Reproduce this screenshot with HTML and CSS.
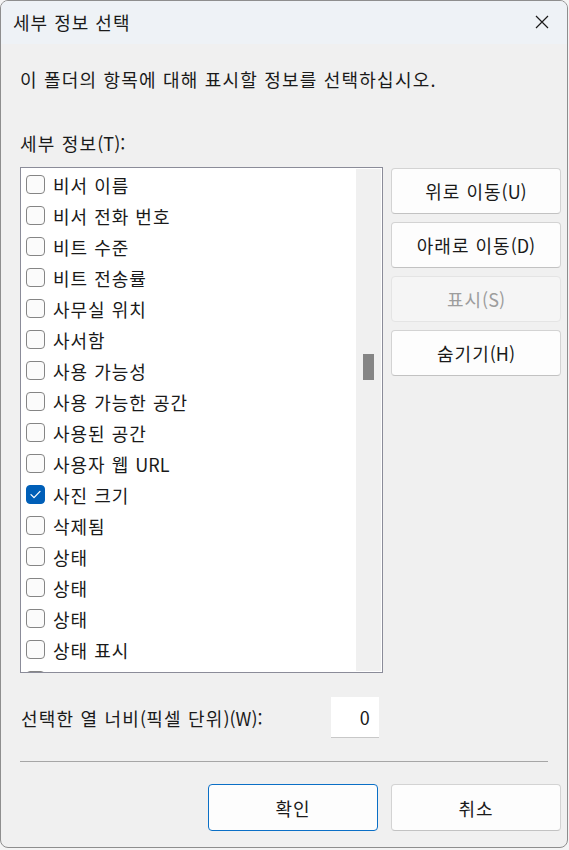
FILE: index.html
```html
<!DOCTYPE html>
<html lang="ko">
<head>
<meta charset="utf-8">
<title>세부 정보 선택</title>
<link rel="stylesheet" href="styles.css">
</head>
<body>
<div class="window">
  <div class="titlebar">
    <span class="title">세부 정보 선택</span>
    <span class="close">
      <svg width="14" height="14" viewBox="0 0 14 14"><path d="M1 1 L13 13 M13 1 L1 13" stroke="#1a1a1a" stroke-width="1.2" fill="none"/></svg>
    </span>
  </div>
  <div class="content">
    <p class="desc">이 폴더의 항목에 대해 표시할 정보를 선택하십시오.</p>
    <p class="label">세부 정보<span class="lat">(T):</span></p>
    <div class="main">
      <div class="listbox">
        <ul class="items">
          <li class="item"><span class="cb"></span><span>비서 이름</span></li>
          <li class="item"><span class="cb"></span><span>비서 전화 번호</span></li>
          <li class="item"><span class="cb"></span><span>비트 수준</span></li>
          <li class="item"><span class="cb"></span><span>비트 전송률</span></li>
          <li class="item"><span class="cb"></span><span>사무실 위치</span></li>
          <li class="item"><span class="cb"></span><span>사서함</span></li>
          <li class="item"><span class="cb"></span><span>사용 가능성</span></li>
          <li class="item"><span class="cb"></span><span>사용 가능한 공간</span></li>
          <li class="item"><span class="cb"></span><span>사용된 공간</span></li>
          <li class="item"><span class="cb"></span><span>사용자 웹 <span class="lat">URL</span></span></li>
          <li class="item"><span class="cb checked"><svg width="19" height="19" viewBox="0 0 19 19"><path d="M5 9.6 L8 12.6 L14 6.4" stroke="#ffffff" stroke-width="1.3" fill="none" stroke-linecap="round" stroke-linejoin="round"/></svg></span><span>사진 크기</span></li>
          <li class="item"><span class="cb"></span><span>삭제됨</span></li>
          <li class="item"><span class="cb"></span><span>상태</span></li>
          <li class="item"><span class="cb"></span><span>상태</span></li>
          <li class="item"><span class="cb"></span><span>상태</span></li>
          <li class="item"><span class="cb"></span><span>상태 표시</span></li>
          <li class="item partial"><span class="cb"></span></li>
        </ul>
        <div class="scrollbar"><div class="thumb"></div></div>
      </div>
      <div class="side">
        <button class="btn">위로 이동<span class="lat">(U)</span></button>
        <button class="btn">아래로 이동<span class="lat">(D)</span></button>
        <button class="btn disabled">표시<span class="lat">(S)</span></button>
        <button class="btn">숨기기<span class="lat">(H)</span></button>
      </div>
    </div>
    <div class="width-row">
      <span class="width-label">선택한 열 너비<span class="lat">(</span>픽셀 단위<span class="lat">)(W):</span></span>
      <span class="width-input">0</span>
    </div>
    <div class="sep"></div>
    <div class="footer">
      <button class="btn primary">확인</button>
      <button class="btn">취소</button>
    </div>
  </div>
</div>
</body>
</html>
```

FILE: styles.css
```css
* { box-sizing: border-box; }
html, body {
  margin: 0;
  padding: 0;
  background: #f4f4f4;
}
body {
  font-family: "Noto Sans CJK KR", "Noto Sans", sans-serif;
  color: #1a1a1a;
  font-size: 18px;
  letter-spacing: 1.2px;
}
.lat {
  letter-spacing: 0;
}
.window {
  width: 568px;
  height: 848px;
  border: 1px solid #8e8e8e;
  border-radius: 8px;
  background: #f0f0f0;
  overflow: hidden;
  display: flex;
  flex-direction: column;
}
.titlebar {
  height: 43px;
  background: #eef2f6;
  display: flex;
  align-items: center;
  justify-content: space-between;
  padding-left: 12px;
  padding-right: 18px;
}
.title {
  font-size: 18px;
  letter-spacing: 1px;
  line-height: 24px;
  margin-top: -2px;
}
.close {
  display: flex;
  margin-top: -1px;
}
.content {
  padding: 0 0 0 19px;
  display: flex;
  flex-direction: column;
}
.desc {
  margin: 23px 0 0 0;
  line-height: 24px;
}
.label {
  margin: 40px 0 0 0;
  line-height: 24px;
}
.main {
  margin-top: 12px;
  display: flex;
  gap: 8px;
  align-items: flex-start;
}
.listbox {
  width: 363px;
  height: 506px;
  border: 1px solid #8b8c99;
  background: #ffffff;
  display: flex;
  overflow: hidden;
}
.items {
  list-style: none;
  margin: 0;
  padding: 1px 0 0 5px;
  flex: 1;
  overflow: hidden;
}
.item {
  height: 31px;
  display: flex;
  align-items: center;
  gap: 8px;
  line-height: 24px;
  white-space: nowrap;
  letter-spacing: 1px;
}
.cb {
  width: 19px;
  height: 19px;
  flex: none;
  border: 1px solid #858585;
  border-radius: 4px;
  background: #fbfbfb;
  display: flex;
}
.cb.checked {
  background: #005fb8;
  border-color: #005fb8;
}
.cb.checked svg {
  margin: -1px;
}
.scrollbar {
  width: 25px;
  flex: none;
  background: #f0f0f0;
  margin: 1px 1px 1px 0;
  padding-top: 185px;
  display: flex;
  justify-content: center;
}
.thumb {
  width: 11px;
  height: 26px;
  background: #858585;
}
.side {
  display: flex;
  flex-direction: column;
  gap: 8px;
  padding-top: 1px;
}
.btn {
  font-family: inherit;
  font-size: 18px;
  letter-spacing: 1px;
  color: #1a1a1a;
  width: 170px;
  height: 46px;
  background: #fdfdfd;
  border: 1px solid #d3d3d3;
  border-bottom-color: #c2c2c2;
  border-radius: 4px;
  padding: 0;
  line-height: 24px;
}
.btn .lat {
  letter-spacing: 0;
}
.btn.disabled {
  background: #f5f5f5;
  border-color: #e4e4e4;
  color: #9d9d9d;
}
.btn.primary {
  border: 1px solid #0a6fc6;
}
.width-row {
  margin-top: 24px;
  display: flex;
  align-items: center;
  width: 359px;
  justify-content: space-between;
}
.width-label {
  line-height: 24px;
  padding-left: 1px;
}
.width-input {
  width: 48px;
  height: 41px;
  background: #ffffff;
  border-bottom: 1px solid #c8c8c8;
  display: flex;
  align-items: center;
  justify-content: flex-end;
  padding-right: 8px;
  line-height: 24px;
}
.sep {
  margin-top: 23px;
  width: 528px;
  height: 1px;
  background: #a6a6a6;
}
.footer {
  margin-top: 22px;
  display: flex;
  justify-content: flex-end;
  gap: 13px;
  padding-right: 6px;
}
.footer .btn {
  height: 47px;
}
```
